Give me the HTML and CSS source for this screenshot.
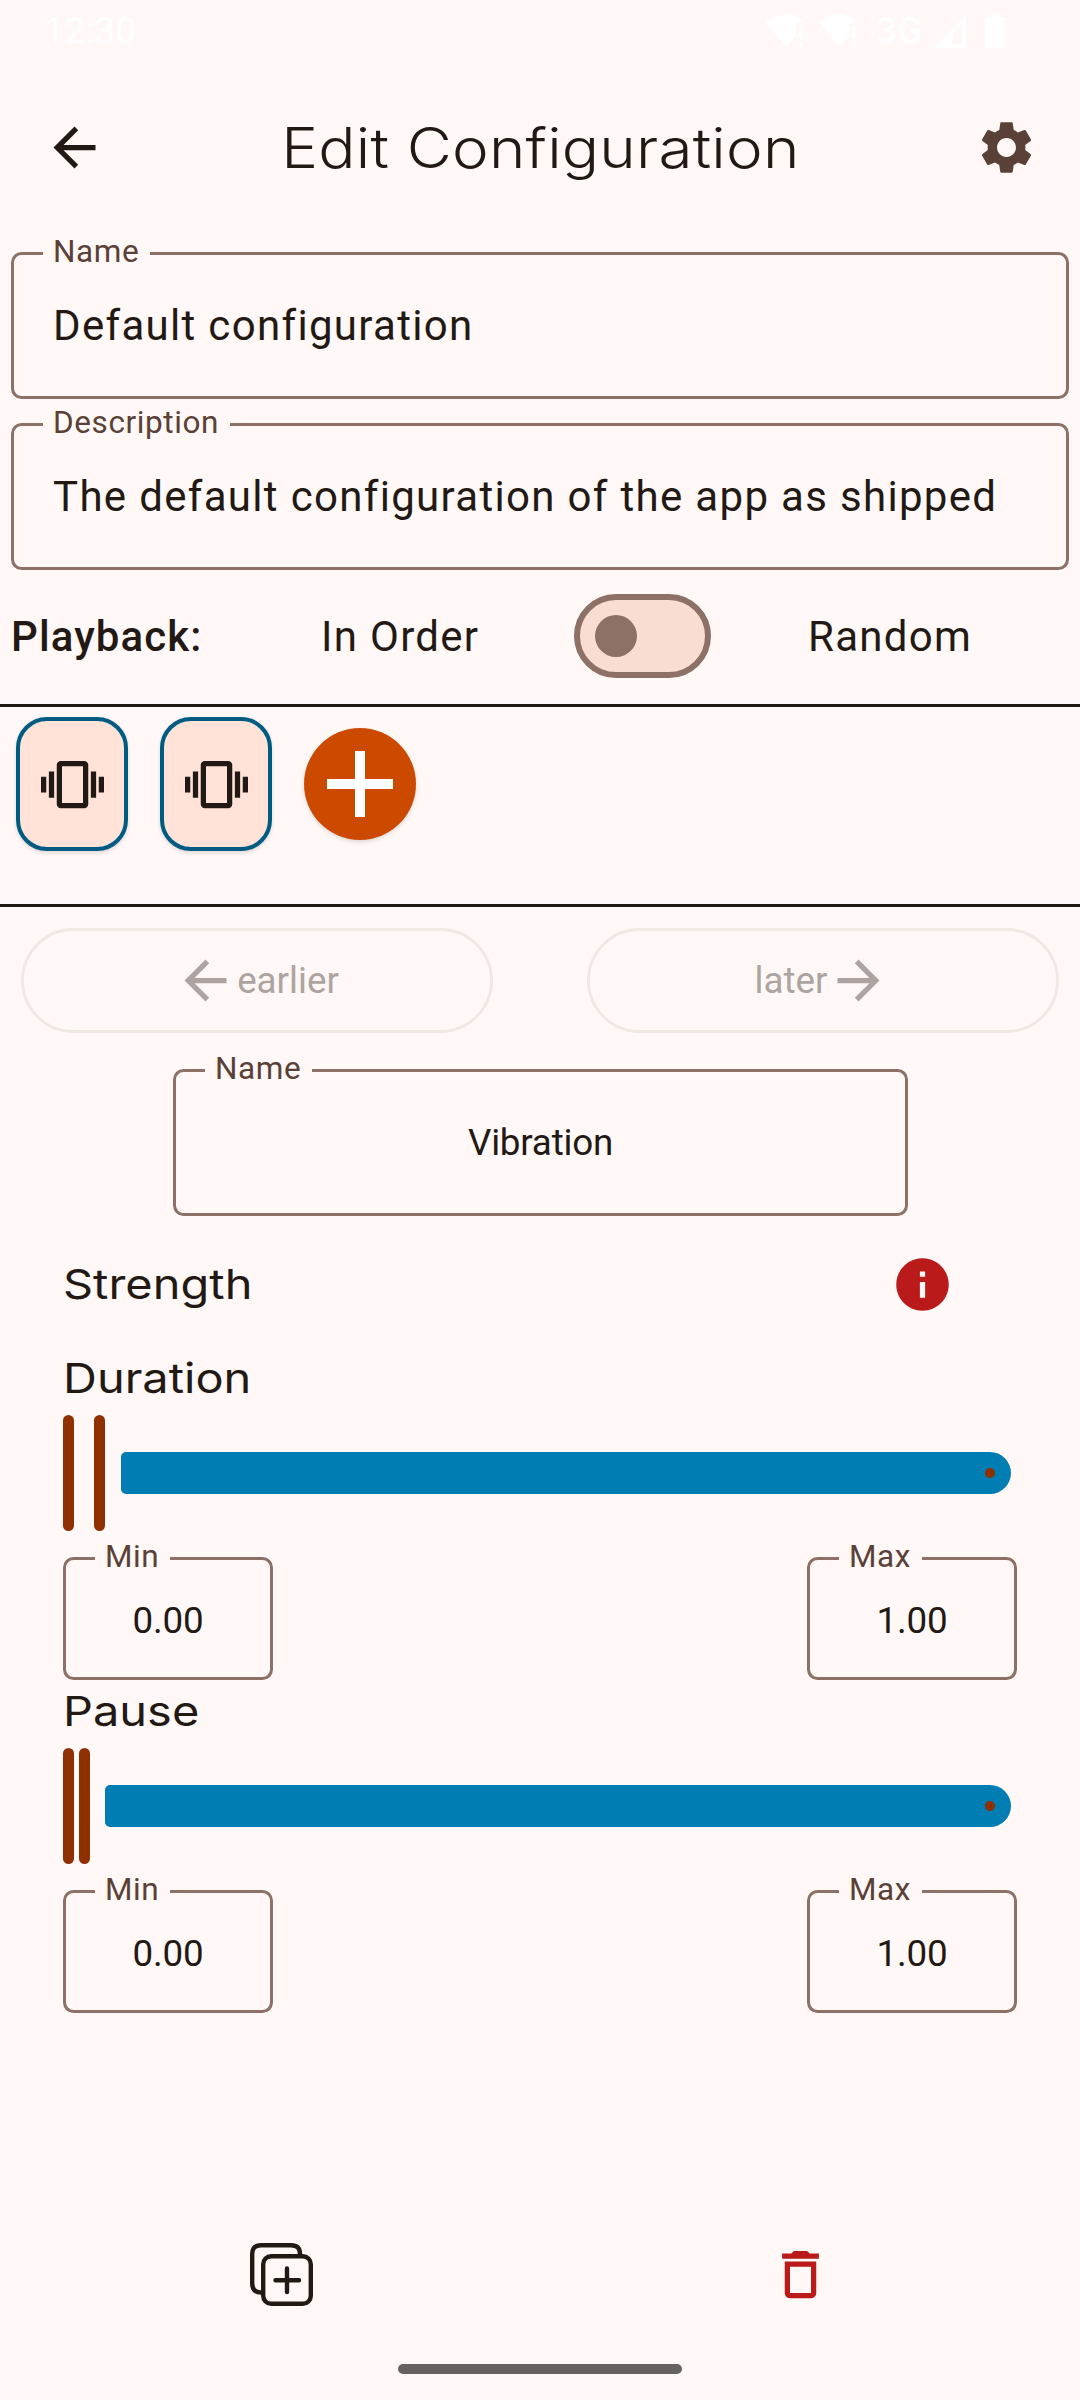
FILE: index.html
```html
<!DOCTYPE html>
<html lang="en">
<head>
<meta charset="utf-8">
<title>Edit Configuration</title>
<link rel="stylesheet" href="styles.css">
</head>
<body>
<div class="screen">
  <div class="status">
    <span class="clock">12:30</span>
    <div class="status-icons">
      <svg class="wifi" viewBox="0 0 39 34"><path d="M0 8.500C11-2.500 28-2.500 39 8.500H30V22L20 33z"/><path d="M33 13h3.500v12H33zM33 29h3.500v4H33z"/></svg>
      <svg class="wifi" viewBox="0 0 39 34"><path d="M0 8.500C11-2.500 28-2.500 39 8.500H30V22L20 33z"/><path d="M33 13h3.500v12H33zM33 29h3.500v4H33z"/></svg>
      <span class="network">3G</span>
      <svg class="signal" viewBox="0 0 32 33"><path fill-rule="evenodd" d="M0 33L32 0V31q0 2-2 2zM18.500 18.500V29.500H28.500V8.500z"/></svg>
      <svg class="battery" viewBox="0 0 20 34"><path d="M6 0h8v3h4q2 0 2 2v27q0 2-2 2H2q-2 0-2-2V5q0-2 2-2h4z"/></svg>
    </div>
  </div>

  <header class="topbar">
    <svg class="icon ink" viewBox="0 0 24 24"><path d="M20 11H7.830l5.590-5.590L12 4l-8 8 8 8 1.410-1.410L7.830 13H20v-2z"/></svg>
    <h1 class="title">Edit Configuration</h1>
    <svg class="icon gear" viewBox="0 0 24 24"><path d="M19.140 12.940c.040-.300.060-.610.060-.940 0-.320-.020-.640-.070-.940l2.030-1.580c.180-.140.230-.410.120-.610l-1.920-3.320c-.120-.220-.370-.290-.590-.220l-2.390.960c-.500-.380-1.030-.700-1.620-.940l-.360-2.540c-.040-.240-.240-.410-.480-.410h-3.840c-.240 0-.430.170-.470.410l-.360 2.540c-.590.240-1.130.570-1.620.940l-2.390-.960c-.220-.080-.470 0-.590.220L2.740 8.870c-.120.210-.080.470.120.610l2.030 1.580c-.050.300-.090.630-.090.940s.020.640.070.940l-2.030 1.580c-.180.140-.230.410-.120.610l1.920 3.320c.120.220.370.290.590.220l2.390-.960c.500.380 1.030.700 1.620.940l.360 2.540c.050.240.240.410.480.410h3.840c.240 0 .440-.170.470-.410l.360-2.540c.590-.240 1.130-.560 1.620-.940l2.390.960c.220.080.470 0 .590-.220l1.920-3.320c.120-.220.070-.470-.120-.610l-2.010-1.580zM12 15.600c-1.980 0-3.600-1.620-3.600-3.600s1.620-3.600 3.600-3.600 3.600 1.620 3.600 3.600-1.620 3.600-3.600 3.600z"/></svg>
  </header>

  <section class="details">
    <div class="field"><span class="label">Name</span><span class="value">Default configuration</span></div>
    <div class="field"><span class="label">Description</span><span class="value">The default configuration of the app as shipped</span></div>
  </section>

  <section class="playback">
    <span class="playback-title">Playback:</span>
    <span class="mode in-order">In Order</span>
    <span class="switch"><span class="knob"></span></span>
    <span class="mode random">Random</span>
  </section>

  <section class="patterns">
    <div class="card"><svg class="icon ink" viewBox="0 0 24 24"><path d="M0 15h2V9H0v6zm3 2h2V7H3v10zm19-8v6h2V9h-2zm-3 8h2V7h-2v10zM16.500 3h-9C6.670 3 6 3.670 6 4.500v15c0 .830.670 1.500 1.500 1.500h9c.830 0 1.500-.670 1.500-1.500v-15c0-.830-.670-1.500-1.500-1.500zM16 19H8V5h8v14z"/></svg></div>
    <div class="card"><svg class="icon ink" viewBox="0 0 24 24"><path d="M0 15h2V9H0v6zm3 2h2V7H3v10zm19-8v6h2V9h-2zm-3 8h2V7h-2v10zM16.500 3h-9C6.670 3 6 3.670 6 4.500v15c0 .830.670 1.500 1.500 1.500h9c.830 0 1.500-.670 1.500-1.500v-15c0-.830-.670-1.500-1.500-1.500zM16 19H8V5h8v14z"/></svg></div>
    <div class="add"><svg class="plus" viewBox="0 0 66 66"><path d="M28 0h10v28h28v10H38v28H28V38H0V28h28z"/></svg></div>
  </section>

  <section class="order">
    <div class="pill"><svg class="icon" viewBox="0 0 24 24"><path d="M20 11H7.830l5.590-5.590L12 4l-8 8 8 8 1.410-1.410L7.830 13H20v-2z"/></svg><span>earlier</span></div>
    <div class="pill"><span>later</span><svg class="icon" viewBox="0 0 24 24"><path d="M12 4l-1.410 1.410L16.170 11H4v2h12.170l-5.580 5.590L12 20l8-8z"/></svg></div>
  </section>

  <div class="field pattern-name"><span class="label">Name</span><span class="value">Vibration</span></div>

  <section class="strength">
    <h2 class="heading">Strength</h2>
    <svg class="icon info" viewBox="0 0 24 24"><path d="M12 2C6.480 2 2 6.480 2 12s4.480 10 10 10 10-4.480 10-10S17.520 2 12 2zm1 15h-2v-6h2v6zm0-8h-2V7h2v2z"/></svg>
  </section>

  <section class="range duration">
    <h2 class="heading">Duration</h2>
    <div class="slider"><span class="thumb"></span><span class="thumb"></span><span class="track"><span class="stop"></span></span></div>
    <div class="limits">
      <div class="field small"><span class="label">Min</span><span class="value">0.00</span></div>
      <div class="field small"><span class="label">Max</span><span class="value">1.00</span></div>
    </div>
  </section>

  <section class="range pause">
    <h2 class="heading">Pause</h2>
    <div class="slider"><span class="thumb"></span><span class="thumb"></span><span class="track"><span class="stop"></span></span></div>
    <div class="limits">
      <div class="field small"><span class="label">Min</span><span class="value">0.00</span></div>
      <div class="field small"><span class="label">Max</span><span class="value">1.00</span></div>
    </div>
  </section>

  <footer class="actions">
    <svg class="duplicate" viewBox="0 0 63 63"><path d="M50 12V11Q50 2.200 41 2.200H11Q2.200 2.200 2.200 11V40Q2.200 49.500 11 49.500H12"/><rect x="13.200" y="13.200" width="47.600" height="47.600" rx="8"/><path d="M37 25.500V49M25.500 37.200H49"/></svg>
    <svg class="icon trash" viewBox="0 0 24 24"><path d="M6 19c0 1.100.900 2 2 2h8c1.100 0 2-.900 2-2V7H6v12zM8 9h8v10H8V9zm7.500-5l-1-1h-5l-1 1H5v2h14V4h-3.500z"/></svg>
  </footer>
  <div class="home"></div>
</div>
</body>
</html>
```
FILE: styles.css
```css
* { box-sizing: border-box; }
body { margin: 0; background: #fff8f6; }
.screen {
  width: 1080px;
  height: 2400px;
  overflow: hidden;
  display: flex;
  flex-direction: column;
  color: #231914;
  font-family: Roboto, sans-serif;
}
.icon { width: 63px; height: 63px; flex: none; fill: currentColor; }
.ink { color: #231914; }

.status {
  height: 62px;
  padding: 0 75px 0 44px;
  display: flex;
  justify-content: space-between;
  align-items: center;
  color: #fff;
  fill: #fff;
  font-size: 37px;
  line-height: 62px;
}
.status-icons { display: flex; align-items: center; }
.wifi { width: 39px; height: 34px; margin-right: 14px; }
.network { width: 48px; margin: 0 10px 0 4px; font-weight: 500; }
.signal { width: 32px; height: 33px; margin-right: 19px; }
.battery { width: 20px; height: 34px; }

.topbar {
  height: 171px;
  padding: 0 42px 0 43px;
  display: flex;
  justify-content: space-between;
  align-items: center;
}
.title {
  margin: 0;
  font: 300 55.5px/72px Inter, sans-serif;
  letter-spacing: 0.2px;
  white-space: nowrap;
  transform: scaleX(1.115);
}
.gear { color: #5a4137; }

.details { padding: 19px 11px 0; display: flex; flex-direction: column; gap: 24px; }
.field {
  position: relative;
  height: 147px;
  padding: 0 39px;
  border: 3px solid #8d7166;
  border-radius: 10.5px;
  display: flex;
  align-items: center;
  font-size: 42px;
  letter-spacing: 1.32px;
}
.label {
  position: absolute;
  left: 29px;
  top: -24px;
  padding: 0 11px 0 10px;
  background: #fff8f6;
  color: #5a4137;
  font-size: 31.5px;
  line-height: 42px;
  letter-spacing: 0.6px;
}
.value { white-space: nowrap; }

.playback {
  height: 134px;
  padding: 0 0 2px 11px;
  display: flex;
  align-items: center;
  font-size: 42px;
  letter-spacing: 1.3px;
}
.playback-title { width: 310px; font-weight: 500; letter-spacing: 1.1px; }
.in-order { width: 253px; }
.switch {
  width: 137px;
  height: 84px;
  margin-right: 97px;
  padding-left: 15px;
  display: flex;
  align-items: center;
  border: 6px solid #8d7166;
  border-radius: 42px;
  background: #f9ddd3;
}
.knob { width: 42px; height: 42px; border-radius: 50%; background: #8d7166; }

.patterns {
  height: 203px;
  padding: 10px 16px 0;
  display: flex;
  gap: 32px;
  border-top: 3px solid #231914;
  border-bottom: 3px solid #231914;
}
.card {
  width: 112px;
  height: 134px;
  display: flex;
  justify-content: center;
  align-items: center;
  border: 4px solid #005b82;
  border-radius: 31px;
  background: #ffe3d8;
  box-shadow: 0 2px 4px rgba(0, 0, 0, 0.13);
}
.add {
  width: 112px;
  height: 112px;
  margin-top: 11px;
  display: flex;
  justify-content: center;
  align-items: center;
  border-radius: 50%;
  background: #cc4a00;
  box-shadow: 0 2px 4px rgba(0, 0, 0, 0.13);
}
.plus { width: 66px; height: 66px; fill: #fff; }

.order { padding: 21px 21px 0; display: flex; justify-content: space-between; }
.pill {
  width: 472px;
  height: 105px;
  padding-right: 1px;
  display: flex;
  justify-content: center;
  align-items: center;
  border: 3px solid #f2e8e3;
  border-radius: 53px;
  color: #ada4a1;
  font-size: 36.75px;
}

.pattern-name {
  width: 735px;
  margin: 36px 0 0 173px;
  justify-content: center;
  font-size: 36.75px;
  letter-spacing: -0.2px;
}

.heading {
  margin: 0;
  font: 400 41px/54px Inter, sans-serif;
  transform: scaleX(1.145);
  transform-origin: left;
}
.strength {
  height: 63px;
  margin-top: 37px;
  padding: 0 126px 0 63px;
  display: flex;
  justify-content: space-between;
  align-items: center;
}
.strength .heading { padding-bottom: 2px; }
.info { color: #ba1a1a; }

.range { padding: 0 63px; display: flex; flex-direction: column; }
.duration { margin-top: 35px; }
.pause { margin-top: 4px; }
.range .heading { height: 64px; }
.slider { height: 116px; display: flex; align-items: center; }
.thumb { width: 11px; height: 116px; margin-right: 20px; border-radius: 5.5px; background: #8f3000; }
.thumb + .thumb { margin-right: 16px; }
.pause .thumb:first-child { margin-right: 5px; }
.pause .thumb + .thumb { margin-right: 15px; }
.track {
  flex: 1;
  height: 42px;
  margin-right: 6px;
  padding-right: 16px;
  display: flex;
  justify-content: flex-end;
  align-items: center;
  border-radius: 5px 21px 21px 5px;
  background: #007db3;
}
.stop { width: 10.5px; height: 10.5px; border-radius: 50%; background: #8f3000; }
.limits { margin-top: 26px; display: flex; justify-content: space-between; }
.small {
  width: 210px;
  height: 123px;
  padding: 3px 0 0;
  justify-content: center;
  font-size: 36.75px;
  letter-spacing: -0.2px;
}

.actions {
  height: 63px;
  margin-top: 230px;
  padding: 0 248px 0 250px;
  display: flex;
  justify-content: space-between;
}
.duplicate { width: 63px; height: 63px; fill: none; stroke: #231914; stroke-width: 4.4; stroke-linecap: round; }
.trash { color: #ba1a1a; }
.home { width: 284px; height: 10px; margin: 58px 0 0 398px; border-radius: 5px; background: #666260; }
```
